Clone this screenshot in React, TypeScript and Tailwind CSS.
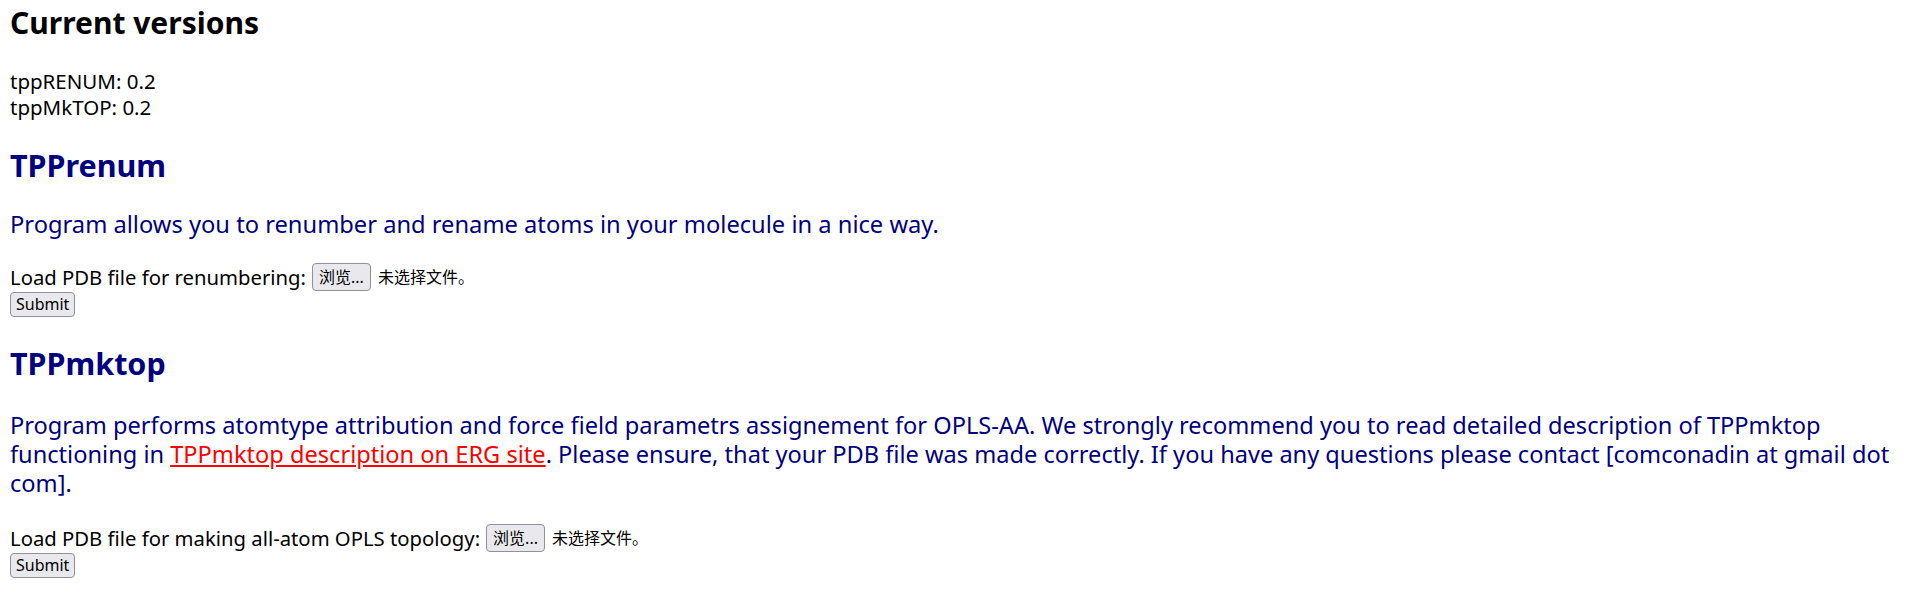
export default function App() {
  return (
    <div className="min-h-screen bg-white px-[10px] text-black" style={{ fontFamily: '"Noto Sans", "Noto Sans CJK SC", sans-serif' }}>
      <h2 className="pt-[6px] text-[30px] font-bold leading-[34px]">Current versions</h2>

      <div className="mt-[28px] text-[20.5px] leading-[26px]">
        <div>tppRENUM: 0.2</div>
        <div>tppMkTOP: 0.2</div>
      </div>

      {/* TPPrenum */}
      <h2 className="mt-[28px] text-[30.5px] font-bold leading-[34px] text-[#000080]">TPPrenum</h2>
      <p className="mt-[28px] text-[23.7px] leading-[29px] text-[#000080]">
        Program allows you to renumber and rename atoms in your molecule in a nice way.
      </p>
      <form className="mt-[24px]">
        <div className="flex h-[28px] items-center text-[20.3px] leading-[26px]">
          <span>Load PDB file for renumbering:</span>
          <FilePicker />
        </div>
        <SubmitButton />
      </form>

      {/* TPPmktop */}
      <h2 className="mt-[29px] text-[30.5px] font-bold leading-[34px] text-[#000080]">TPPmktop</h2>
      <p className="mt-[31px] text-[23.6px] leading-[29px] text-[#000080]">
        Program performs atomtype attribution and force field parametrs assignement for OPLS-AA. We strongly recommend
        you to read detailed description of TPPmktop functioning in{' '}
        <a href="#" className="inline-block leading-[29px] text-[#ff0000] underline">
          TPPmktop description on ERG site
        </a>
        . Please ensure, that your PDB file was made correctly. If you have any questions please contact [comconadin at
        gmail dot com].
      </p>
      <form className="mt-[26px]">
        <div className="flex h-[28px] items-center text-[20.3px] leading-[26px]">
          <span>Load PDB file for making all-atom OPLS topology:</span>
          <FilePicker />
        </div>
        <SubmitButton />
      </form>
    </div>
  )
}

function FilePicker() {
  return (
    <span className="ml-[6px] flex items-center">
      <button
        type="button"
        className="h-[28px] rounded-[4px] border border-[#8f8f9d] bg-[#e9e9ed] px-[6px] text-[16px] leading-[26px] text-black"
      >
        浏览...
      </button>
      <span className="ml-[7px] text-[16px] leading-[26px]">未选择文件。</span>
    </span>
  )
}

function SubmitButton() {
  return (
    <button
      type="button"
      className="mt-[1px] block h-[25px] rounded-[4px] border border-[#8f8f9d] bg-[#e9e9ed] px-[5px] text-[16px] leading-[23px] text-black"
    >
      Submit
    </button>
  )
}
